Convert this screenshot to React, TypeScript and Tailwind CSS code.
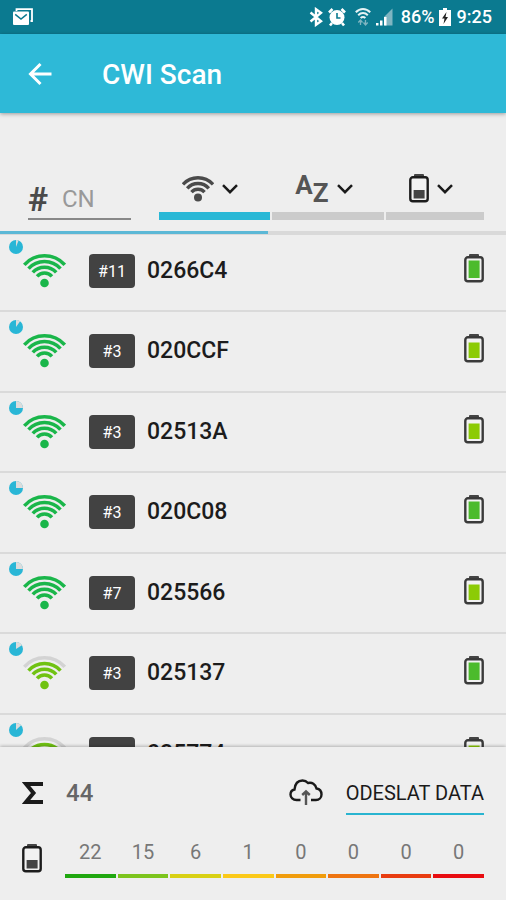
import React from "react";

const GREEN = "#1ab64a";
const LIME = "#70c212";
const FULL = "#4cbb2c";
const GOOD = "#8ccb05";

type Device = {
  code: string;
  channel: string;
  age: number;
  signal: "strong" | "medium";
  battery: "full" | "good";
};

const devices: Device[] = [
  { code: "0266C4", channel: "#11", age: 0.06, signal: "strong", battery: "full" },
  { code: "020CCF", channel: "#3", age: 0.1, signal: "strong", battery: "good" },
  { code: "02513A", channel: "#3", age: 0.25, signal: "strong", battery: "good" },
  { code: "020C08", channel: "#3", age: 0.25, signal: "strong", battery: "full" },
  { code: "025566", channel: "#7", age: 0.25, signal: "strong", battery: "good" },
  { code: "025137", channel: "#3", age: 0.16, signal: "medium", battery: "full" },
  { code: "025774", channel: "#3", age: 0.13, signal: "medium", battery: "good" },
];

const levels = [
  { count: 22, bar: "bg-[#1fa70f]" },
  { count: 15, bar: "bg-[#7cc41c]" },
  { count: 6, bar: "bg-[#d8d013]" },
  { count: 1, bar: "bg-[#fbc918]" },
  { count: 0, bar: "bg-[#f09c0c]" },
  { count: 0, bar: "bg-[#ee7410]" },
  { count: 0, bar: "bg-[#e83c10]" },
  { count: 0, bar: "bg-[#e80c10]" },
];

function arc(cx: number, cy: number, r: number, deg: number) {
  const a = (deg * Math.PI) / 180;
  const dx = r * Math.sin(a);
  const y = cy - r * Math.cos(a);
  return `M${cx - dx} ${y}A${r} ${r} 0 0 1 ${cx + dx} ${y}`;
}

function Signal({ level }: { level: Device["signal"] }) {
  const color = level === "strong" ? GREEN : LIME;
  return (
    <svg viewBox="0 0 44 34" className="h-[34px] w-11" fill="none" strokeWidth="3.5" role="img" aria-label="Signal">
      <path d={arc(22.5, 29, 27.2, 48)} stroke={level === "strong" ? GREEN : "#d3d3d3"} />
      <path d={arc(22.5, 29, 21.5, 48)} stroke={color} />
      <path d={arc(22.5, 29, 15.8, 48)} stroke={color} />
      <path d={arc(22.5, 29, 10, 48)} stroke={color} />
      <circle cx="22.5" cy="29" r="4.3" fill={color} />
    </svg>
  );
}

function Age({ value }: { value: number }) {
  const a = value * 2 * Math.PI;
  const x = 7 + 7 * Math.sin(a);
  const y = 7 - 7 * Math.cos(a);
  return (
    <svg viewBox="0 0 14 14" className="absolute left-[9px] top-2 size-[14px]" aria-hidden="true">
      <circle cx="7" cy="7" r="7" fill="#29b6d6" />
      <path d={`M7 7V0A7 7 0 0 1 ${x} ${y}Z`} fill="#dcdcdc" />
    </svg>
  );
}

function Battery({ level }: { level: "full" | "good" | "low" }) {
  return (
    <svg viewBox="0 0 20 29" className="h-[29px] w-5" role="img" aria-label="Battery">
      <rect x="5" y="0" width="10" height="4" rx="1" fill="#444" />
      <rect x="1.3" y="3.3" width="17.4" height="24" rx="2.6" fill="#f2f2f2" stroke={level === "low" ? "#1c1c1c" : "#3a3a3a"} strokeWidth="2.4" />
      {level === "full" && <rect x="4.6" y="6.5" width="11" height="17.5" fill={FULL} />}
      {level === "good" && <rect x="4.6" y="8.5" width="11" height="15.5" fill={GOOD} />}
      {level === "low" && <rect x="4.6" y="16" width="11" height="8.5" fill="#444" />}
    </svg>
  );
}

function Chevron() {
  return (
    <svg viewBox="0 0 16 10" className="h-[10px] w-4" fill="none" stroke="#1a1a1a" strokeWidth="2.5" aria-hidden="true">
      <path d="M1 1.2 8 8.2 15 1.2" />
    </svg>
  );
}

function StatusBar() {
  return (
    <div className="flex h-[34px] shrink-0 items-center bg-[#0b7a90] pl-3 pr-[14px] text-white">
      <svg viewBox="0 0 22 18" className="h-[18px] w-[22px]" fill="none" aria-hidden="true">
        <path d="M4.5 3V1.2H20V13H18.5" stroke="#fff" strokeWidth="1.8" />
        <rect x="1" y="3.5" width="16" height="13.5" rx="1" fill="#fff" />
        <path d="M3.2 6.3 9 11l5.8-4.7" stroke="#0b7a90" strokeWidth="1.5" />
      </svg>
      <div className="ml-auto flex items-center">
        <svg viewBox="0 0 14 20" className="mr-1 h-5 w-[14px]" fill="none" stroke="#fff" strokeWidth="2.4" aria-hidden="true">
          <path d="M1.5 5.5 12 14.2 7 17.8V2.200l5 3.600L1.5 14.5" />
        </svg>
        <svg viewBox="0 0 20 20" className="mr-2 size-5" fill="none" aria-hidden="true">
          <circle cx="10" cy="10.5" r="7.5" fill="#fff" />
          <path d="M2 5.5 5.5 2M18 5.5 14.5 2M5 16l-2 2.5M15 16l2 2.5" stroke="#fff" strokeWidth="2.600" />
          <path d="M10 6v5h3.5" stroke="#0b7a90" strokeWidth="1.6" />
        </svg>
        <svg viewBox="0 0 16 20" className="mr-1 h-5 w-4" fill="none" stroke="#e6f2f4" strokeWidth="2" aria-hidden="true">
          <path d="M.8 5.2c4.2-4.4 10.200-4.400 14.400 0M3.200 8.200c2.800-2.800 6.800-2.800 9.600 0M5.600 11c1.500-1.300 3.300-1.300 4.800 0" />
          <path d="M5.500 13v5M3.300 15.500l2.200-2.500 2 2.500M10.500 13v5M8.500 15.500l2 2.500 2.200-2.500" stroke="#7fb5c1" strokeWidth="1.300" />
        </svg>
        <svg viewBox="0 0 18 18" className="mr-2 size-[18px]" aria-hidden="true">
          <path d="M9.500 8.500 17.500.5V17.500h-8z" fill="#7fb5c1" />
          <path d="M1 15h2.500v2.500H1zM5 12.500h2.500v5H5zM9 9h2.500v8.500H9z" fill="#fff" />
        </svg>
        <span className="text-lg font-medium">86%</span>
        <svg viewBox="0 0 12 18" className="ml-1 mr-[6px] h-[18px] w-3" aria-hidden="true">
          <path d="M4 0h4v2h4v16H0V2h4z" fill="#fff" />
          <path d="M7.500 4 3 10.500h2.500L4.500 16 9 9H6.500z" fill="#222" />
        </svg>
        <span className="text-lg font-medium">9:25</span>
      </div>
    </div>
  );
}

function SortTab({ active, label, children }: { active?: boolean; label: string; children: React.ReactNode }) {
  return (
    <button
      type="button"
      aria-label={label}
      className={`flex h-[50px] items-start justify-center border-b-8 pr-2 pt-1 ${active ? "border-[#29b8d6]" : "border-[#cbcbcb]"}`}
    >
      <span className="flex h-[29px] items-center gap-2">
        {children}
        <Chevron />
      </span>
    </button>
  );
}

function Row({ device }: { device: Device }) {
  return (
    <li className="relative flex shrink-0 items-start border-b-2 border-[#dadada] px-[22px] pt-[22px] odd:h-20 even:h-[81px]">
      <Age value={device.age} />
      <Signal level={device.signal} />
      <span className="ml-[23px] flex h-[34px] w-[46px] items-center justify-center rounded-sm bg-[#424242] pt-[2px] text-base text-white">
        {device.channel}
      </span>
      <span className="ml-3 text-[23px] font-medium leading-[33px] text-[#1c1c1c]">{device.code}</span>
      <span className="ml-auto">
        <Battery level={device.battery} />
      </span>
    </li>
  );
}

export default function App() {
  return (
    <div className="flex h-screen flex-col overflow-hidden bg-[#eeeeee] font-['Roboto',sans-serif]">
      <StatusBar />
      <header className="z-10 flex h-[79px] shrink-0 items-center bg-[#2eb9d7] pl-7 pt-[2px] text-white shadow-[0_1px_4px_rgba(0,0,0,0.35)]">
        <button type="button" aria-label="Back">
          <svg viewBox="0 0 24 26" className="h-[26px] w-6" fill="none" stroke="#fff" strokeWidth="3" aria-hidden="true">
            <path d="M23.500 12H2.500M12.500 2 2.500 12l10 10" />
          </svg>
        </button>
        <h1 className="ml-[50px] text-[28px] font-medium">CWI Scan</h1>
      </header>

      <section className="flex h-[118px] shrink-0 items-end pb-[11px] pl-7 pr-[22px]">
        <label className="flex h-10 w-[103px] shrink-0 items-center border-b-2 border-[#888888]">
          <span className="w-[34px] shrink-0 text-[34px] font-bold text-[#4a4a4a]">#</span>
          <input
            type="text"
            placeholder="CN"
            aria-label="CN"
            className="w-full min-w-0 bg-transparent text-2xl outline-none placeholder:text-[#999999]"
          />
        </label>
        <div className="ml-7 grid flex-1 grid-cols-[111fr_113fr_98fr] gap-[2px]">
          <SortTab active label="Sort by signal">
            <svg viewBox="0 0 32 26" className="h-[26px] w-8" fill="none" stroke="#4a4a4a" strokeWidth="3.4" aria-hidden="true">
              <path d={arc(16, 22, 20.3, 48)} />
              <path d={arc(16, 22, 14.500, 48)} />
              <path d={arc(16, 22, 8.8, 48)} />
              <circle cx="16" cy="21.500" r="4" fill="#4a4a4a" stroke="none" />
            </svg>
          </SortTab>
          <SortTab label="Sort by name">
            <span className="flex h-8 text-[26px] font-bold leading-6 text-[#555555]">
              <span>A</span>
              <span className="self-end">Z</span>
            </span>
          </SortTab>
          <SortTab label="Sort by battery">
            <Battery level="low" />
          </SortTab>
        </div>
      </section>

      <div className="flex h-1 shrink-0 bg-[#d9d9d9]">
        <div className="h-[3px] w-[53%] bg-[#5cb8d6]" />
      </div>

      <ul className="-mt-[3px] flex min-h-0 flex-1 flex-col overflow-y-auto [scrollbar-width:none]">
        {devices.map((d) => (
          <Row key={d.code} device={d} />
        ))}
      </ul>

      <footer className="z-10 shrink-0 bg-[#eeeeee] px-[22px] pb-[22px] pt-[30px] shadow-[0_-1px_3px_rgba(0,0,0,0.25)]">
        <div className="flex h-[38px] items-start">
          <svg viewBox="0 0 22 24" className="mt-1 h-6 w-[22px]" fill="none" stroke="#1a1a1a" strokeWidth="4" aria-label="Total" role="img">
            <path d="M21 3H4l7.500 9L4 21h17" />
          </svg>
          <span className="ml-[22px] text-2xl font-medium text-[#666666]">44</span>
          <svg viewBox="0 0 34 26" className="ml-auto mt-[2px] h-[26px] w-[34px]" fill="none" stroke="#1a1a1a" strokeWidth="2.400" aria-hidden="true">
            <path d="M11.500 21H7.500C4 21 1.500 18.500 1.500 15.500c0-2.500 1.700-4.500 4-5C6 5 9 1.500 13.500 1.500c2 0 4 .8 5.500 2.500 4-1 7.500 1 8.500 5.500 3 .5 5 3 5 6 0 3.300-2.500 5.500-5.500 5.500H22" />
            <path d="M17 26V14M13.200 16 17 12.500l3.800 3.500" stroke="#555" />
          </svg>
          <button type="button" className="ml-[23px] h-[38px] border-b-2 border-[#29b4d0] pb-1 text-xl text-[#1a1a1a]">
            ODESLAT DATA
          </button>
        </div>
        <div className="mt-[23px] flex h-10 items-start">
          <div className="mt-[6px]">
            <Battery level="low" />
          </div>
          <div className="ml-[23px] grid h-10 flex-1 grid-cols-8 gap-[2px] text-center text-xl text-[#777777]">
            {levels.map((l, i) => (
              <div key={i} className="flex flex-col justify-between">
                <span>{l.count}</span>
                <span className={`h-1 ${l.bar}`} />
              </div>
            ))}
          </div>
        </div>
      </footer>
    </div>
  );
}
